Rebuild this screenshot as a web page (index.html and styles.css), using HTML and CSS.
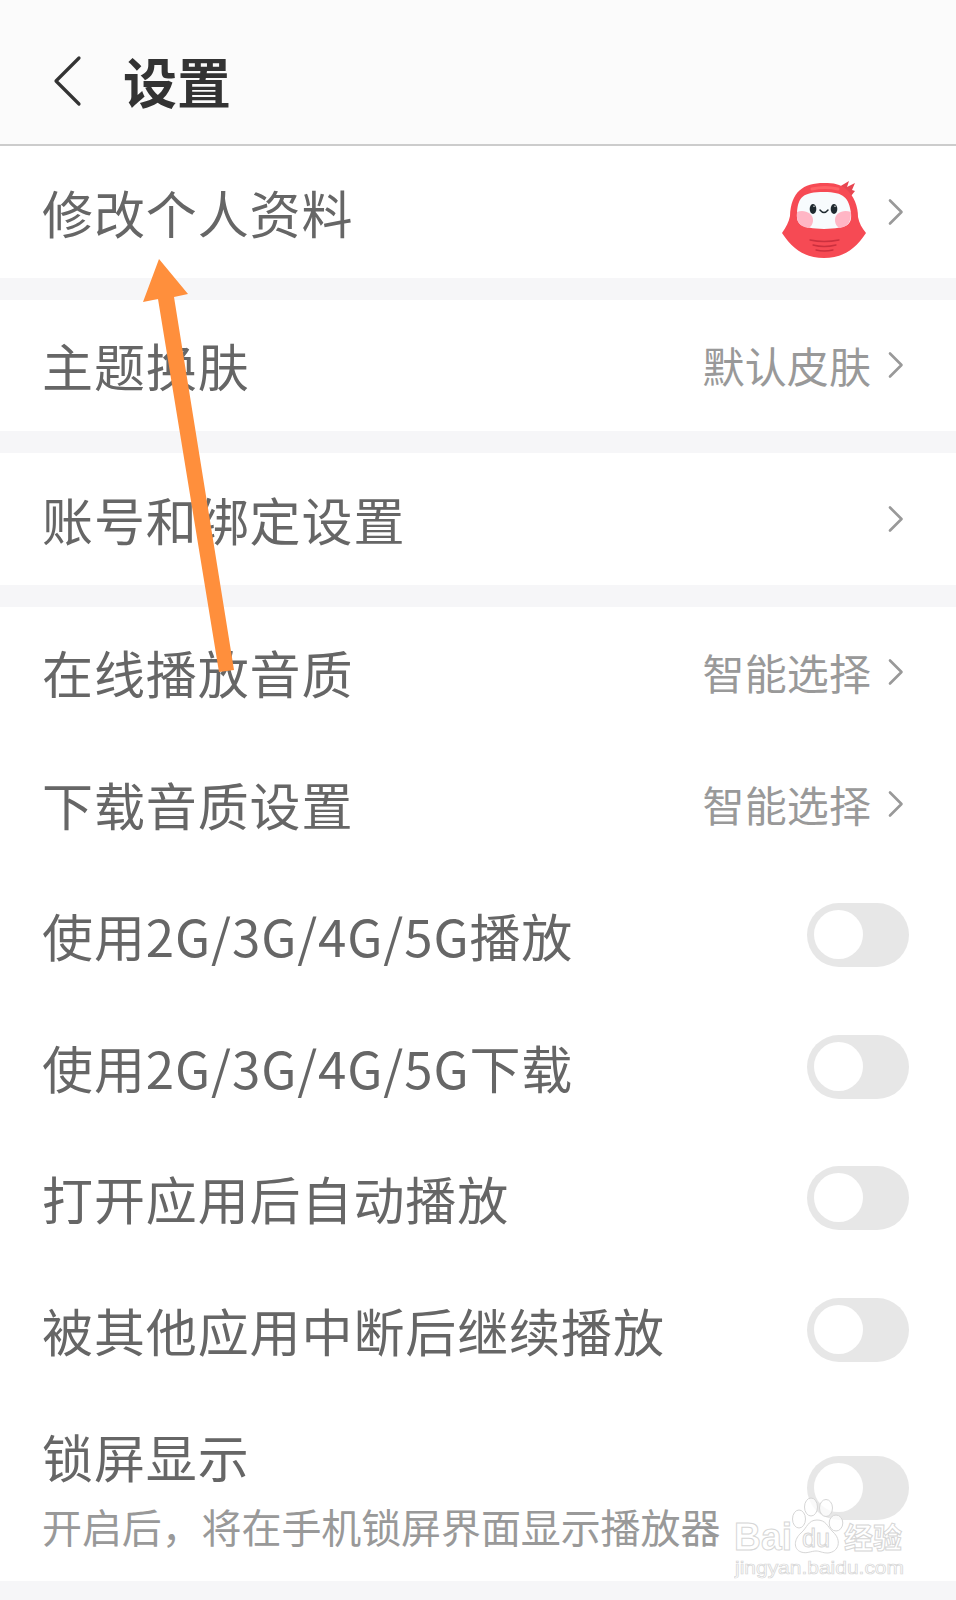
FILE: index.html
```html
<!DOCTYPE html>
<html lang="zh-CN">
<head>
    <meta charset="UTF-8">
    <meta name="viewport" content="width=device-width, initial-scale=1.0">
    <title>设置</title>
    <link rel="stylesheet" href="styles.css">
</head>
<body>

<svg class="defs" width="0" height="0">
    <symbol id="chevron" viewBox="0 0 16 28">
        <path d="M2 2.5 L13.5 14 L2 25.5" fill="none" stroke="#999" stroke-width="2.6" stroke-linecap="round" stroke-linejoin="round"/>
    </symbol>
</svg>

<div class="page">
    <header class="header">
        <svg class="back" viewBox="0 0 30 52">
            <path d="M26 3 L3 26 L26 49" fill="none" stroke="#333" stroke-width="3.2" stroke-linecap="round" stroke-linejoin="round"/>
        </svg>
        <h1>设置</h1>
    </header>

    <section class="group">
        <div class="row">
            <span class="label">修改个人资料</span>
            <svg class="avatar" viewBox="0 0 84 78">
                <path d="M57 6 L67 0 L65 6 L73 2 L70 9 L73 10 L69 15 Z" fill="#e74550"/>
                <path d="M8 35 C9 11 21 2 42 2 C52 2 58 3 64 8 C72 15 76 25 76 36 C77 42 80 47 84 52 C73 69 60 77 42 77 C24 77 11 69 0 52 C4 46 7 41 8 35 Z" fill="#f64a54"/>
                <path d="M30 8 Q43 5 56 8" fill="none" stroke="#ff6266" stroke-width="3" stroke-linecap="round"/>
                <path d="M15 32 C16 16 21 11 42 11 C62 11 67 17 69 32 C70 44 66 47 42 48 C19 47 14 44 15 32 Z" fill="#f7fbfd"/>
                <path d="M15 31 C22 28 31 32 31 39 C31 43 29 46 26 47 C18 45 14 42 15 31 Z" fill="#ffb6c5"/>
                <path d="M69 31 C61 28 53 32 53 39 C53 43 55 46 58 47 C66 45 69 42 69 31 Z" fill="#ffb6c5"/>
                <ellipse cx="31" cy="28" rx="3.3" ry="5" fill="#1f2a30"/>
                <ellipse cx="52" cy="28" rx="3.3" ry="5" fill="#1f2a30"/>
                <circle cx="32" cy="25.2" r="0.7" fill="#fff"/>
                <circle cx="53" cy="25.2" r="0.7" fill="#fff"/>
                <path d="M38 29 Q42 34 46 29" fill="none" stroke="#1f2a30" stroke-width="1.5" stroke-linecap="round"/>
                <path d="M28 59 Q42 62 57 59 M31 64 Q42 67 54 64 M34 69 Q42 71 51 69" fill="none" stroke="#cb303e" stroke-width="1.3" stroke-linecap="round"/>
            </svg>
            <svg class="chevron"><use href="#chevron"/></svg>
        </div>
    </section>

    <section class="group">
        <div class="row">
            <span class="label">主题换肤</span>
            <span class="value">默认皮肤</span>
            <svg class="chevron"><use href="#chevron"/></svg>
        </div>
    </section>

    <section class="group">
        <div class="row">
            <span class="label">账号和绑定设置</span>
            <svg class="chevron"><use href="#chevron"/></svg>
        </div>
    </section>

    <section class="group">
        <div class="row">
            <span class="label">在线播放音质</span>
            <span class="value">智能选择</span>
            <svg class="chevron"><use href="#chevron"/></svg>
        </div>
        <div class="row">
            <span class="label">下载音质设置</span>
            <span class="value">智能选择</span>
            <svg class="chevron"><use href="#chevron"/></svg>
        </div>
        <div class="row">
            <span class="label">使用2G/3G/4G/5G播放</span>
            <span class="switch"></span>
        </div>
        <div class="row">
            <span class="label">使用2G/3G/4G/5G下载</span>
            <span class="switch"></span>
        </div>
        <div class="row">
            <span class="label">打开应用后自动播放</span>
            <span class="switch"></span>
        </div>
        <div class="row">
            <span class="label">被其他应用中断后继续播放</span>
            <span class="switch"></span>
        </div>
        <div class="row row-tall">
            <div class="text">
                <span class="label">锁屏显示</span>
                <span class="desc">开启后，将在手机锁屏界面显示播放器</span>
            </div>
            <span class="switch"></span>
        </div>
    </section>

    <!-- arrow pointing at the first row -->
    <svg class="arrow" viewBox="0 0 100 420">
        <polygon points="19,4 48,39 34,42 94,415 79,417 18,44 3,47" fill="#ff8f3c"/>
    </svg>

    <svg class="watermark" viewBox="0 0 180 90">
        <g class="outline">
            <text x="0" y="58" class="wm-bai" textLength="58" lengthAdjust="spacingAndGlyphs">Bai</text>
            <ellipse cx="65" cy="27" rx="6.5" ry="9"/>
            <ellipse cx="77" cy="15" rx="6.5" ry="9"/>
            <ellipse cx="92" cy="16" rx="6.5" ry="8.5"/>
            <ellipse cx="102" cy="31" rx="6.8" ry="8"/>
            <path d="M83 28 C92 28 93 34 99 40 C108 48 105 60 94 61 C88 61 86 59 82 59 C77 59 73 62 67 60 C59 57 60 47 67 41 C73 36 74 28 83 28 Z"/>
            <text x="68" y="55" class="wm-du" textLength="28" lengthAdjust="spacingAndGlyphs">du</text>
            <text x="110" y="57" class="wm-cn" textLength="58" lengthAdjust="spacingAndGlyphs">经验</text>
            <text x="1" y="82" class="wm-url" textLength="169" lengthAdjust="spacingAndGlyphs">jingyan.baidu.com</text>
        </g>
    </svg>
</div>

</body>
</html>
```
FILE: styles.css
```css
* {
    box-sizing: border-box;
}
body {
    margin: 0;
    background-color: #f6f6f8;
    font-family: "Noto Sans CJK SC", sans-serif;
    color: #666;
}
.defs {
    position: absolute;
}
.page {
    position: relative;
    height: 1600px;
    overflow: hidden;
}
.header {
    display: flex;
    align-items: center;
    height: 146px;
    padding: 18px 0 0 53px;
    background-color: #fbfbfb;
    border-bottom: 2px solid #ccc;
}
.back {
    width: 30px;
    height: 52px;
}
h1 {
    margin: 0 0 0 40px;
    font-size: 54px;
    line-height: 60px;
    font-weight: 700;
    color: #333;
}
.group {
    margin-bottom: 22px;
    background-color: #fff;
}
.row {
    display: flex;
    align-items: center;
    height: 131.5px;
    padding: 0 47px 0 42px;
}
.label {
    margin-right: auto;
    font-size: 51px;
    line-height: 60px;
    letter-spacing: 0.9px;
    white-space: nowrap;
}
.value {
    font-size: 42px;
    line-height: 50px;
    letter-spacing: 0.1px;
    color: #999;
}
.chevron {
    width: 16px;
    height: 28px;
    margin: 0 5px 0 17px;
}
.avatar {
    width: 84px;
    height: 78px;
    margin-top: 16px;
    margin-right: 5px;
}
.switch {
    flex-shrink: 0;
    width: 102px;
    height: 64px;
    padding: 7px;
    border-radius: 32px;
    background-color: #e7e7e7;
}
.switch::before {
    content: "";
    display: block;
    width: 49px;
    height: 49px;
    border-radius: 50%;
    background-color: #fff;
}
.row-tall {
    height: 185px;
}
.text {
    display: flex;
    flex-direction: column;
    gap: 12px;
    padding-top: 4px;
    margin-right: auto;
}
.desc {
    font-size: 40px;
    line-height: 56px;
    letter-spacing: -0.1px;
    color: #999;
    white-space: nowrap;
}
.arrow {
    position: absolute;
    left: 140px;
    top: 255px;
    width: 100px;
    height: 420px;
}
.watermark {
    position: absolute;
    left: 734px;
    top: 1492px;
    width: 180px;
    height: 90px;
}
.outline {
    fill: #fff;
    fill-opacity: 0.75;
    stroke: #d6d6d6;
    stroke-width: 1;
}
.wm-bai {
    font: 700 39px "Liberation Sans", sans-serif;
}
.wm-du {
    font: 400 26px "Liberation Sans", sans-serif;
}
.wm-cn {
    font: 700 29px "Noto Sans CJK SC", sans-serif;
}
.wm-url {
    font: 400 19px "Liberation Sans", sans-serif;
    stroke-width: 0.7;
}
```
